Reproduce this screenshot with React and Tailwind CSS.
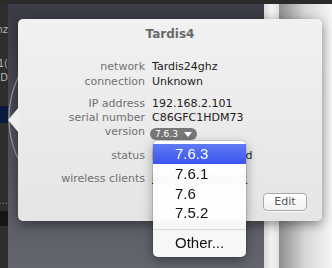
import React from 'react';

const details = [
  [
    ['network', 'Tardis24ghz'],
    ['connection', 'Unknown'],
  ],
  [
    ['IP address', '192.168.2.101'],
    ['serial number', 'C86GFC1HDM73'],
  ],
];

const versions = ['7.6.3', '7.6.1', '7.6', '7.5.2'];

const App = () => {
  return (
    <div className="relative w-[332px] h-[268px] overflow-hidden bg-[#2a2a2a] font-['DejaVu_Sans',sans-serif]">
      {/* Background windows */}
      <div className="flex h-full pt-[4px]">
        <div className="w-[8px] h-full flex flex-col bg-[#2e2e2e] overflow-hidden text-[10px] leading-[12px] text-[#b4b4b4]">
          <div className="flex justify-end mt-[20px]">
            <span className="whitespace-nowrap">24ghz</span>
          </div>
          <div className="flex justify-end mt-[22px]">
            <span className="whitespace-nowrap">192.1(</span>
          </div>
          <div className="flex justify-end mt-[2px]">
            <span className="whitespace-nowrap">C8D</span>
          </div>
          <div className="mt-[22px] h-[17px] bg-[#0b1a3e]" />
          <div className="flex justify-end mt-[72px] text-[#8a8a8a]">
            <span className="whitespace-nowrap">....</span>
          </div>
          <div className="mt-[4px] h-[15px] bg-[#161616]" />
        </div>
        <div className="relative w-[256px] h-full bg-gradient-to-b from-[#393c44] to-[#63666f]">
          <svg className="absolute left-0 top-[17px]" width="200" height="200" viewBox="0 0 200 200">
            <circle cx="97" cy="97" r="96" fill="none" stroke="#9a9ca3" strokeWidth="1.2" />
          </svg>
        </div>
        <div className="w-[15px] h-full bg-gradient-to-r from-[#d9d9d9] via-[#f3f3f3] to-[#e2e2e2]" />
        <div className="flex-1 h-full bg-gradient-to-r from-[#8e8e8e] via-[#d8d8d8] to-[#f6f6f6]" />
      </div>

      {/* Popover */}
      <div className="absolute left-[18px] top-[19px] w-[304px] h-[202px] rounded-[5px] bg-gradient-to-b from-[#f1f1f1] to-[#e5e5e5] shadow-[0_3px_12px_rgba(0,0,0,0.45)] flex flex-col">
        <svg className="absolute left-[-11px] top-[88px]" width="12" height="26" viewBox="0 0 12 26">
          <polygon points="12,0 1,13 12,26" fill="#ededed" />
        </svg>
        <div className="pt-[8px] h-[22px] text-center text-[12px] leading-[14px] font-bold text-[#686868]">
          Tardis4
        </div>

        <div className="mt-[17.5px] grid grid-cols-[127px_1fr] gap-x-[7px] text-[11px] leading-[15px]">
          {details[0].map(([label, value]) => (
            <React.Fragment key={label}>
              <div className="text-right text-[#707070]">{label}</div>
              <div className="text-[#1c1c1c]">{value}</div>
            </React.Fragment>
          ))}
        </div>

        <div className="mt-[8.5px] grid grid-cols-[127px_1fr] gap-x-[7px] text-[11px] leading-[14px]">
          {details[1].map(([label, value]) => (
            <React.Fragment key={label}>
              <div className="text-right text-[#707070]">{label}</div>
              <div className="text-[#1c1c1c]">{value}</div>
            </React.Fragment>
          ))}
          <div className="text-right text-[#707070]">version</div>
          <div className="flex items-center">
            <div className="ml-[-2px] mt-[3px] h-[12px] w-[47px] rounded-full bg-[#777777] flex items-center pl-[5px] gap-[6px] text-[9px] leading-[12px] text-white">
              <span>7.6.3</span>
              <svg width="8" height="5" viewBox="0 0 8 5">
                <polygon points="0,0 8,0 4,5" fill="#ffffff" />
              </svg>
            </div>
          </div>
        </div>

        <div className="mt-[9px] grid grid-cols-[127px_1fr] gap-x-[7px] gap-y-[9px] text-[11px] leading-[14px]">
          <div className="text-right text-[#707070]">status</div>
          <div className="text-[#1c1c1c] whitespace-nowrap">Needs a password</div>
          <div className="text-right text-[#707070]">wireless clients</div>
          <div className="text-[#1c1c1c] underline whitespace-nowrap">Rorys-MacBook-2</div>
        </div>

        <div className="mt-[7px] flex justify-end pr-[15px]">
          <button className="w-[44px] h-[18px] rounded-[4px] border border-[#a9a9a9] bg-gradient-to-b from-[#ffffff] to-[#f0f0f0] text-[11px] leading-[16px] text-[#555555] shadow-[0_1px_0_rgba(255,255,255,0.8)]">
            Edit
          </button>
        </div>
      </div>

      {/* Version menu */}
      <div className="absolute left-[153px] top-[141px] w-[93px] pt-[3px] pb-[4px] rounded-[5px] bg-white/95 backdrop-blur-[2px] shadow-[0_4px_12px_rgba(0,0,0,0.35)] ring-1 ring-black/10 font-['Liberation_Sans',sans-serif] text-[15px] text-[#111111]">
        {versions.map((v, i) => (
          <div
            key={v}
            className={
              i === 0
                ? 'h-[20px] leading-[20px] pl-[22px] bg-gradient-to-b from-[#6079f3] to-[#3a54ee] text-white'
                : 'h-[19.5px] leading-[19.5px] pl-[22px]'
            }
          >
            {v}
          </div>
        ))}
        <div className="mt-[6px] mb-[3.5px] h-px bg-[#d8d8d8]" />
        <div className="h-[20px] leading-[20px] pl-[22px]">Other...</div>
      </div>
    </div>
  );
};

export default App;
